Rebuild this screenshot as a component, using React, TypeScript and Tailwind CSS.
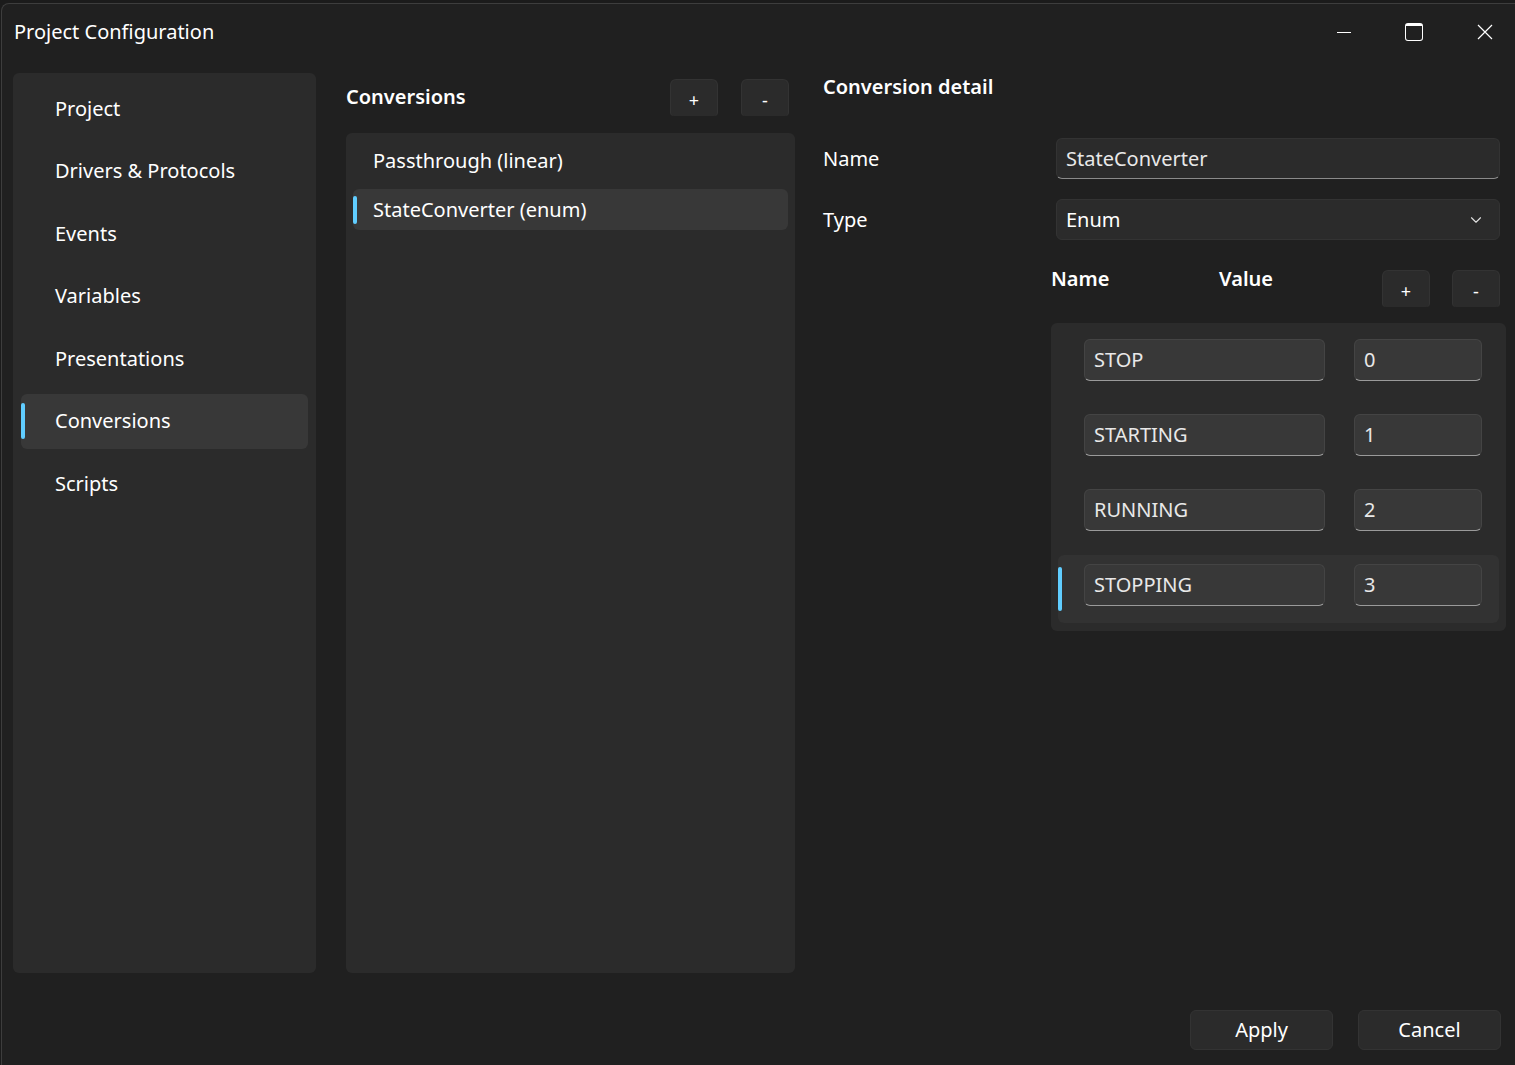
import { ChevronDown } from "lucide-react";

const font = { fontFamily: '"Noto Sans", "Open Sans", sans-serif' };

const navItems = [
  "Project",
  "Drivers & Protocols",
  "Events",
  "Variables",
  "Presentations",
  "Conversions",
  "Scripts",
];

const conversions = ["Passthrough (linear)", "StateConverter (enum)"];

const enumRows = [
  { name: "STOP", value: "0" },
  { name: "STARTING", value: "1" },
  { name: "RUNNING", value: "2" },
  { name: "STOPPING", value: "3" },
];

function SmallButton({ label }: { label: string }) {
  return (
    <button className="flex h-[37px] w-[48px] items-center justify-center rounded-t-md rounded-b-sm border border-b-0 border-[#333333] bg-[#2b2b2b] pt-[5px] text-[18px] text-white">
      {label}
    </button>
  );
}

function Accent({ h }: { h: string }) {
  return <span className={`absolute left-0 top-1/2 w-[4px] -translate-y-1/2 rounded-full bg-[#60cdff] ${h}`} />;
}

export default function App() {
  return (
    <div className="h-[1065px] w-[1515px] overflow-hidden bg-[#1b1b1b] pl-[1px] pt-[3px] text-white" style={font}>
      <div className="flex h-[1062px] w-[1514px] flex-col rounded-tl-lg border-l border-t border-[#3d3d3d] bg-[#202020]">
        {/* TITLE BAR */}
        <div className="flex h-[56px] items-center justify-between pl-[12px]">
          <span className="text-[20px]">Project Configuration</span>
          <div className="flex h-full items-center">
            <div className="flex h-full w-[70px] items-center justify-center">
              <span className="block h-[1px] w-[14px] bg-white" />
            </div>
            <div className="flex h-full w-[70px] items-center justify-center">
              <span className="block h-[18px] w-[18px] rounded-[3px] border border-t-[3px] border-white" />
            </div>
            <div className="flex h-full w-[66px] items-center justify-start pl-[28px]">
              <svg width="16" height="16" viewBox="0 0 16 16" fill="none" stroke="white" strokeWidth="1.2">
                <path d="M1 1 L15 15 M15 1 L1 15" />
              </svg>
            </div>
          </div>
        </div>

        {/* CONTENT */}
        <div className="mt-[13px] flex h-[900px] pl-[11px]">
          {/* NAV */}
          <div className="flex h-full w-[303px] flex-col gap-[7.6px] rounded-md bg-[#2b2b2b] px-[8px] pt-[8px]">
            {navItems.map((item) => (
              <div
                key={item}
                className={`relative flex h-[55px] items-center rounded-md pl-[34px] text-[20px] ${
                  item === "Conversions" ? "bg-[#383838]" : ""
                }`}
              >
                {item === "Conversions" && <Accent h="h-[36px]" />}
                {item}
              </div>
            ))}
          </div>

          {/* CONVERSIONS LIST */}
          <div className="ml-[30px] flex w-[449px] flex-col">
            <div className="flex h-[60px] items-start justify-between pr-[6px]">
              <span className="mt-[9px] text-[20px] font-semibold">Conversions</span>
              <div className="mt-[6px] flex gap-[23px]">
                <SmallButton label="+" />
                <SmallButton label="-" />
              </div>
            </div>
            <div className="flex flex-1 flex-col gap-[8px] rounded-md bg-[#2b2b2b] px-[7px] pt-[7px]">
              {conversions.map((c, i) => (
                <div
                  key={c}
                  className={`relative flex h-[41px] items-center rounded-md pl-[20px] text-[20px] ${
                    i === 1 ? "bg-[#383838]" : ""
                  }`}
                >
                  {i === 1 && <Accent h="h-[28px]" />}
                  {c}
                </div>
              ))}
            </div>
          </div>

          {/* DETAIL */}
          <div className="ml-[28px] flex w-[683px] flex-col">
            <span className="h-[28px] text-[20px] font-semibold leading-[28px]">Conversion detail</span>

            <div className="mt-[37px] flex h-[41px] items-center">
              <span className="w-[233px] text-[20px]">Name</span>
              <div className="flex h-[41px] w-[444px] items-center rounded-md border border-[#333333] border-b-[#8a8a8a] bg-[#2b2b2b] pl-[9px] text-[20px] text-[#e8e8e8]">
                StateConverter
              </div>
            </div>

            <div className="mt-[20px] flex h-[41px] items-center">
              <span className="w-[233px] text-[20px]">Type</span>
              <div className="flex h-[41px] w-[444px] items-center justify-between rounded-md border border-[#333333] bg-[#2b2b2b] pl-[9px] pr-[14px] text-[20px]">
                Enum
                <ChevronDown className="h-[18px] w-[18px] text-[#e0e0e0]" strokeWidth={1.5} />
              </div>
            </div>

            <div className="mt-[30px] flex h-[38px] items-start pl-[228px] pr-[6px]">
              <span className="mt-[-6px] w-[168px] text-[20px] font-semibold">Name</span>
              <span className="mt-[-6px] flex-1 text-[20px] font-semibold">Value</span>
              <div className="flex gap-[22px]">
                <SmallButton label="+" />
                <SmallButton label="-" />
              </div>
            </div>

            <div className="ml-[228px] mt-[15px] flex w-[455px] flex-col gap-[7px] rounded-md bg-[#2b2b2b] px-[7px] pb-[8px] pt-[7px]">
              {enumRows.map((r, i) => (
                <div
                  key={r.name}
                  className={`relative flex h-[68px] items-start pl-[26px] pt-[9px] ${
                    i === 3 ? "rounded-md bg-[#323232]" : ""
                  }`}
                >
                  {i === 3 && <Accent h="h-[44px]" />}
                  <div className="flex h-[42px] w-[241px] items-center rounded-md border border-[#444444] border-b-[#9a9a9a] bg-[#383838] pl-[9px] text-[20px] text-[#e8e8e8]">
                    {r.name}
                  </div>
                  <div className="ml-[29px] flex h-[42px] w-[128px] items-center rounded-md border border-[#444444] border-b-[#9a9a9a] bg-[#383838] pl-[9px] text-[20px] text-[#e8e8e8]">
                    {r.value}
                  </div>
                </div>
              ))}
            </div>
          </div>
        </div>

        {/* FOOTER */}
        <div className="mt-[37px] flex justify-end gap-[25px] pr-[14px]">
          <button className="h-[40px] w-[143px] rounded-md border border-[#333333] bg-[#2b2b2b] text-[20px] text-white">
            Apply
          </button>
          <button className="h-[40px] w-[143px] rounded-md border border-[#333333] bg-[#2b2b2b] text-[20px] text-white">
            Cancel
          </button>
        </div>
      </div>
    </div>
  );
}
